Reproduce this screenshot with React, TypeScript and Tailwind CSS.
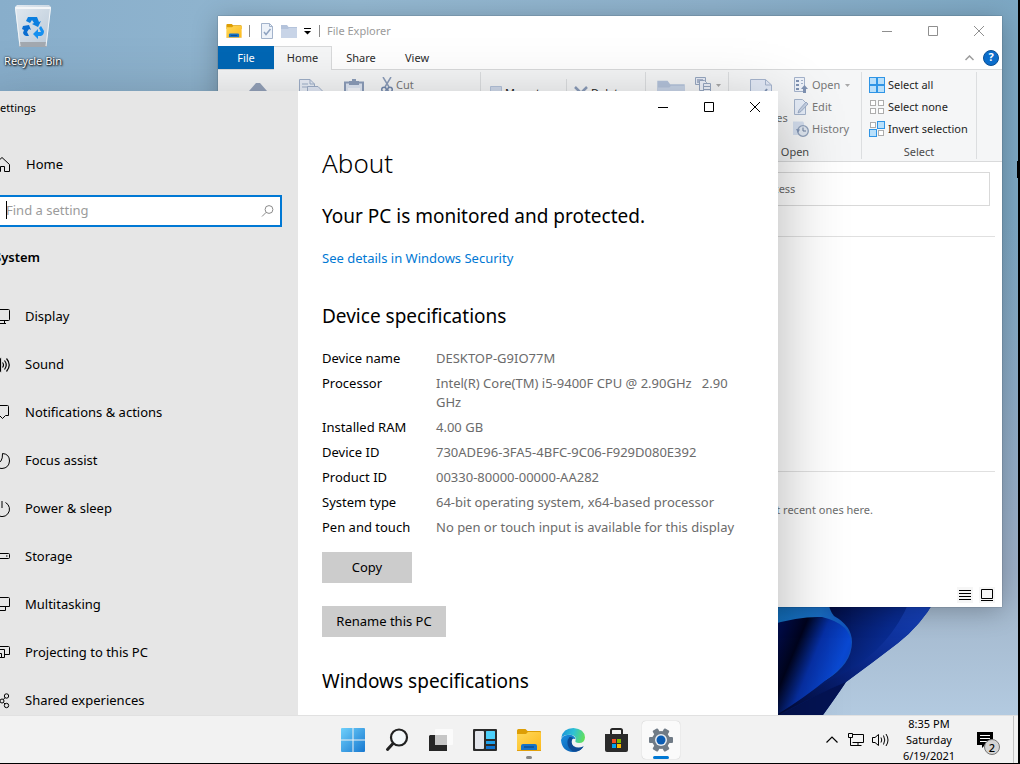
import type { ReactNode } from 'react';

type IconProps = { className?: string };

/* ---------- Desktop ---------- */

const Wallpaper = () => (
  <svg
    className="absolute inset-0 h-full w-full"
    viewBox="0 0 1018 715"
    preserveAspectRatio="xMaxYMax slice"
    aria-hidden="true"
  >
    <defs>
      <linearGradient id="sky" x1="0" y1="0" x2="1" y2="0">
        <stop offset="0" stopColor="#88aecb" />
        <stop offset="0.35" stopColor="#93b7d0" />
        <stop offset="0.7" stopColor="#8db0ca" />
        <stop offset="1" stopColor="#7ca7c3" />
      </linearGradient>
      <linearGradient id="skyLow" x1="0" y1="0" x2="0" y2="1">
        <stop offset="0.3" stopColor="#9aacc6" stopOpacity="0" />
        <stop offset="0.8" stopColor="#9db0c8" />
        <stop offset="0.86" stopColor="#a5bacf" />
        <stop offset="1" stopColor="#b3cae0" />
      </linearGradient>
      <linearGradient id="petalOuter" x1="0" y1="0" x2="1" y2="0.4">
        <stop offset="0" stopColor="#03072f" />
        <stop offset="0.35" stopColor="#03104a" />
        <stop offset="0.7" stopColor="#08298c" />
        <stop offset="1" stopColor="#0d39aa" />
      </linearGradient>
      <linearGradient id="petalEdge" x1="1" y1="0" x2="0" y2="1">
        <stop offset="0" stopColor="#1745c0" />
        <stop offset="0.5" stopColor="#0a2787" />
        <stop offset="1" stopColor="#020a38" />
      </linearGradient>
      <linearGradient id="petalInner" x1="0" y1="0.2" x2="1" y2="0.7">
        <stop offset="0" stopColor="#021060" />
        <stop offset="0.3" stopColor="#01041f" />
        <stop offset="0.52" stopColor="#0731a8" />
        <stop offset="0.8" stopColor="#0a49d2" />
        <stop offset="1" stopColor="#0a3fb8" />
      </linearGradient>
      <linearGradient id="petalRim" x1="0" y1="0" x2="1" y2="0.300">
        <stop offset="0" stopColor="#137acb" />
        <stop offset="0.6" stopColor="#1b74cf" />
        <stop offset="1" stopColor="#0f50bd" />
      </linearGradient>
    </defs>
    <rect width="1018" height="715" fill="url(#sky)" />
    <rect width="1018" height="715" fill="url(#skyLow)" />
    <path d="M770 600H935Q921 625 898 643Q872 663 846 682Q836 697 823 715H770Z" fill="url(#petalOuter)" />
    <path d="M910 600H935Q921 625 898 643Q872 663 846 682Q810 698 778 715V712Q810 690 846 672Q890 648 910 600Z" fill="url(#petalEdge)" />
    <path d="M846 682Q836 697 823 715H782Q812 696 846 682Z" fill="#041353" />
    <path d="M770 600H828Q829 610 834 616Q852 626 852 642Q852 664 826 680L778 700Z" fill="url(#petalRim)" />
    <path d="M770 625Q800 616 822 617Q852 624 851 645Q849 664 826 680Q804 698 778 714H770Z" fill="url(#petalInner)" />
  </svg>
);

const RecycleBinIcon = () => (
  <svg width="38" height="44" viewBox="0 0 38 44" aria-hidden="true">
    <defs>
      <linearGradient id="bin" x1="0" y1="0" x2="1" y2="1">
        <stop offset="0" stopColor="#e2e9f0" />
        <stop offset="1" stopColor="#b9c9d8" />
      </linearGradient>
    </defs>
    <path d="M1 3L3 1H35L37 3L32.500 43H5.500Z" fill="url(#bin)" />
    <path d="M1 3H37L36.700 5H1.300Z" fill="#f4f6f8" />
    <path d="M5 38H33L32.500 43H5.500Z" fill="#a3a9b0" />
    <path d="M1.500 4L6 42M36.500 4L32 42" stroke="#f1f5f8" fill="none" />
    <path d="M14 13h9l2 5 2-1-3 6-6-3 2-1-2-3-2 3-4-2z" fill="#0b7fe0" />
    <path d="M9 22l6-1 2 5-2-1-2 3 2 4h-3q-2 0-3-3l1-3-2-1z" fill="#0a6ed1" />
    <path d="M27 22l3 5q0 4-3 5h-3v3l-5-5 5-5v3h3l-2-4z" fill="#1590f0" />
  </svg>
);

const FolderIcon = ({ className }: IconProps) => (
  <svg className={className} viewBox="0 0 24 22" aria-hidden="true">
    <defs>
      <linearGradient id="folderFront" x1="0" y1="0" x2="1" y2="1">
        <stop offset="0" stopColor="#ffd95a" />
        <stop offset="1" stopColor="#fcb91d" />
      </linearGradient>
    </defs>
    <path d="M0 1.500Q0 0 1.500 0H8.500L10.500 2H23Q24 2 24 3V8H0Z" fill="#dd9e05" />
    <path d="M0 5H9L11 3H23Q24 3 24 4V21H0Z" fill="url(#folderFront)" />
    <path d="M4 21V17Q4 15 6 15H18Q20 15 20 17V21Z" fill="#1673c8" />
    <path d="M7 18H17" stroke="#0c4f94" strokeWidth="1.500" />
    <path d="M0 21.500H24" stroke="#e2a00c" />
  </svg>
);

/* ---------- File Explorer icons ---------- */

const CheckedDocIcon = () => (
  <svg width="12" height="16" viewBox="0 0 12 16" aria-hidden="true">
    <path d="M.5.5H8.500L11.500 3.500V15.500H.5Z" fill="#edf2f9" stroke="#a3b3cb" />
    <path d="M8.500.5V3.500H11.500" fill="none" stroke="#a3b3cb" />
    <path d="M3 9L5 11.500L9.500 6" fill="none" stroke="#8ea2c0" strokeWidth="1.500" />
  </svg>
);

const PaleFolderIcon = ({ className }: IconProps) => (
  <svg className={className} viewBox="0 0 16 14" aria-hidden="true">
    <path d="M0 1H6L7.500 3H16V14H0Z" fill="#b4c3db" />
    <path d="M0 5H7L8 4H16V14H0Z" fill="#c8d4e7" />
  </svg>
);

const PinIcon = () => (
  <svg width="20" height="26" viewBox="0 0 20 26" aria-hidden="true">
    <path d="M8 4H12L19 12V16H1V12Z" fill="#94a2ba" />
    <path d="M10 16V24" stroke="#94a2ba" strokeWidth="2" />
  </svg>
);

const CopyIcon = () => (
  <svg width="24" height="26" viewBox="0 0 24 26" aria-hidden="true">
    <path d="M.5.5H11L15.500 5V20.500H.5Z" fill="#e9eef8" stroke="#9fafc9" />
    <path d="M11 .5V5H15.500M3 5H9M3 8H12" fill="none" stroke="#9fafc9" />
    <path d="M8.500 7.500H19L23.500 12V25.500H8.500Z" fill="#e2e9f6" stroke="#9fafc9" />
  </svg>
);

const PasteIcon = () => (
  <svg width="20" height="26" viewBox="0 0 20 26" aria-hidden="true">
    <path d="M1 3.500H19V25H1Z" fill="#dfe7f4" stroke="#8c9dba" strokeWidth="2" />
    <path d="M5 2H8V0H12V2H15V6H5Z" fill="#8c9dba" />
    <path d="M4 9H16V25H4Z" fill="#f3f6fb" />
  </svg>
);

const ScissorsIcon = () => (
  <svg width="12" height="16" viewBox="0 0 12 16" aria-hidden="true">
    <path d="M2 0L8 10M10 0L4 10" stroke="#8c9dba" strokeWidth="1.500" />
    <circle cx="3" cy="12.500" r="2.300" fill="none" stroke="#7389ae" strokeWidth="1.500" />
    <circle cx="9" cy="12.500" r="2.300" fill="none" stroke="#7389ae" strokeWidth="1.500" />
  </svg>
);

const StackIcon = () => (
  <svg width="16" height="16" viewBox="0 0 16 16" aria-hidden="true">
    <path d="M.5.5H10.500V7.500H.5Z" fill="#e9eef8" stroke="#97a7c1" />
    <path d="M2 3H8M2 5H6" stroke="#6d80a2" />
    <path d="M4.500 3.500H9.500L11.500 5.500V13.500H4.500Z" fill="#eef2fa" stroke="#97a7c1" />
    <path d="M8.500 6.500H15.500V15.500H8.500Z" fill="#eef2fa" stroke="#97a7c1" />
    <path d="M9 9.500H15M9 12.500H15" stroke="#97a7c1" />
  </svg>
);

const PropertiesIcon = () => (
  <svg width="22" height="26" viewBox="0 0 22 26" aria-hidden="true">
    <path d="M.5.5H15.500L21.500 6V25.500H.5Z" fill="#e2e9f6" stroke="#a6b5ce" />
    <path d="M15.500.5V6H21.500" fill="none" stroke="#a6b5ce" />
    <path d="M5 17L9 21L17 10" stroke="#8194b4" strokeWidth="2" fill="none" />
  </svg>
);

const OpenIcon = () => (
  <svg width="16" height="16" viewBox="0 0 16 16" aria-hidden="true">
    <path d="M1.500.5H11.500V14.500H1.500Z" fill="#eef2f9" stroke="#a4b3cb" />
    <path d="M3 3H6V5H3ZM3 7H6V9H3ZM3 11H6V13H3Z" fill="#7f92b2" />
    <path d="M8 3.500H10M8 6.500H10" stroke="#a4b3cb" />
    <path d="M11.500 8L15 12H13V16H10V12H8Z" fill="#7f92b2" />
  </svg>
);

const EditIcon = () => (
  <svg width="16" height="16" viewBox="0 0 16 16" aria-hidden="true">
    <path d="M1.500.5H9.500L12.500 3.500V15.500H1.500Z" fill="#e6edf8" stroke="#a4b3cb" />
    <path d="M5 14L6 11L13 3L15 5L8 12.500Z" fill="#c3cfe2" stroke="#8fa1be" strokeWidth="0.800" />
  </svg>
);

const HistoryIcon = () => (
  <svg width="16" height="16" viewBox="0 0 16 16" aria-hidden="true">
    <path d="M0 .5H10L11 2V14H0Z" fill="#d3dded" />
    <circle cx="10" cy="10" r="5.300" fill="#dfe6f0" stroke="#8fa0ba" strokeWidth="1.300" />
    <path d="M10 6.500V10H13" stroke="#6b7d9b" fill="none" />
    <path d="M3 8L5 12L7 8.500" fill="#7f92b2" />
  </svg>
);

// four tiles, filled ones are drawn in blue
const TilesIcon = ({ filled }: { filled: boolean[] }) => (
  <svg width="16" height="16" viewBox="0 0 16 16" aria-hidden="true">
    {filled.map((on, i) => {
      const x = (i % 2) * 8;
      const y = Math.floor(i / 2) * 8;
      return on ? (
        <rect key={i} x={x + 0.5} y={y + 0.5} width="7" height="7" fill="#b9e0fb" stroke="#2f95e6" />
      ) : (
        <rect key={i} x={x + 1.5} y={y + 1.5} width="5" height="5" fill="#fff" stroke="#adadad" />
      );
    })}
  </svg>
);

const ArrowBlockIcon = () => (
  <svg width="12" height="14" viewBox="0 0 12 14" aria-hidden="true">
    <path d="M.5.5H11.500V13.500H.5Z" fill="#cfd9ea" stroke="#b4c3db" />
  </svg>
);

const CrossIcon = () => (
  <svg width="14" height="14" viewBox="0 0 14 14" aria-hidden="true">
    <path d="M1 1L13 13M13 1L1 13" stroke="#8c9dba" strokeWidth="2.500" />
  </svg>
);

const Caret = ({ className }: IconProps) => (
  <svg className={className} width="5" height="3" viewBox="0 0 5 3" aria-hidden="true">
    <path d="M0 0H5L2.500 3Z" fill="currentColor" />
  </svg>
);

/* ---------- Window buttons ---------- */

function WindowControls({ className }: IconProps) {
  return (
    <div className={`flex ${className}`}>
      <button type="button" aria-label="Minimize" className="flex w-[46px] items-center justify-center">
        <svg width="10" height="10" shapeRendering="crispEdges"><path d="M0 5.500H10" stroke="currentColor" /></svg>
      </button>
      <button type="button" aria-label="Maximize" className="flex w-[46px] items-center justify-center">
        <svg width="10" height="10"><path d="M.5.5H9.500V9.500H.5Z" fill="none" stroke="currentColor" /></svg>
      </button>
      <button type="button" aria-label="Close" className="flex w-[46px] items-center justify-center">
        <svg width="10" height="10"><path d="M0 0L10 10M10 0L0 10" stroke="currentColor" /></svg>
      </button>
    </div>
  );
}

/* ---------- File Explorer ---------- */

function RibbonGroup({ label, className, children }: { label: string; className: string; children: ReactNode }) {
  return (
    <section className={`flex shrink-0 flex-col pt-1 ${className}`}>
      <div className="flex h-[69px]">{children}</div>
      <div className="text-center leading-[18px] text-[#4b4b4b]">{label}</div>
    </section>
  );
}

const RibbonDivider = () => <div className="my-[2px] w-px shrink-0 bg-[#dcdee0]" />;

function BigButton({ icon, label, className }: { icon: ReactNode; label: string; className: string }) {
  return (
    <button type="button" className={`flex shrink-0 flex-col items-center gap-1 pt-[5px] text-[#6d6d6d] ${className}`}>
      {icon}
      <span className="leading-[18px]">{label}</span>
    </button>
  );
}

function SmallButton({ icon, label, disabled, caret }: { icon: ReactNode; label: string; disabled?: boolean; caret?: boolean }) {
  return (
    <button
      type="button"
      className={`flex h-[22px] items-center gap-[3px] whitespace-nowrap ${disabled ? 'text-[#777777]' : 'text-[#1e1e1e]'}`}
    >
      {icon}
      {label && <span>{label}</span>}
      {caret && <Caret className="ml-[2px] text-[#a8a8a8]" />}
    </button>
  );
}

function FileExplorer() {
  return (
    <div className="absolute top-4 left-[218px] flex h-[591px] w-[784px] flex-col overflow-hidden bg-white text-[11px] shadow-[0_4px_24px_rgba(0,0,0,0.25),0_0_1px_rgba(0,0,0,0.5)]">
      <header className="flex h-[30px] shrink-0 pl-2">
        <div className="flex items-center text-[#9a9a9a]">
          <FolderIcon className="h-[14px] w-4" />
          <div className="ml-[7px] h-3 w-px bg-[#8a8a8a]" />
          <button type="button" aria-label="Properties" className="ml-[11px]"><CheckedDocIcon /></button>
          <button type="button" aria-label="New folder" className="ml-2"><PaleFolderIcon className="h-[14px] w-4" /></button>
          <button type="button" aria-label="Customize Quick Access Toolbar" className="ml-[7px] text-black">
            <svg width="7" height="7" viewBox="0 0 7 7"><path d="M0 .5H7" stroke="currentColor" /><path d="M0 3H7L3.500 6.500Z" fill="currentColor" /></svg>
          </button>
          <div className="ml-2 h-3 w-px bg-[#8a8a8a]" />
          <h2 className="ml-[7px]">File Explorer</h2>
        </div>
        <WindowControls className="ml-auto text-[#8f8f8f]" />
      </header>

      <nav className="flex h-6 shrink-0 border-b border-[#d9dadb] text-[#2b2b2b]">
        <button type="button" className="w-14 bg-[#0067b5] pt-px text-white">File</button>
        <button type="button" className="-mb-px w-[58px] border-t border-r border-[#d9dadb] bg-[#f5f6f7]">Home</button>
        <button type="button" className="w-[58px] pt-px">Share</button>
        <button type="button" className="w-[54px] pt-px">View</button>
        <div className="ml-auto flex items-center gap-[9px] pr-[3px]">
          <button type="button" aria-label="Collapse the Ribbon">
            <svg width="9" height="6" viewBox="0 0 9 6"><path d="M.5 5L4.500 1L8.500 5" fill="none" stroke="#9b9b9b" strokeWidth="1.500" /></svg>
          </button>
          <button type="button" aria-label="Help" className="flex h-4 w-4 items-center justify-center rounded-full border border-[#0a4f94] bg-[#0b6dcb] font-bold text-white">
            ?
          </button>
        </div>
      </nav>

      <div className="flex h-[92px] shrink-0 border-b border-[#d9dadb] bg-[#f5f6f7]">
        <RibbonGroup label="Clipboard" className="w-[262px] pl-3">
          <BigButton icon={<PinIcon />} label="Pin" className="w-14" />
          <BigButton icon={<CopyIcon />} label="Copy" className="w-[50px]" />
          <BigButton icon={<PasteIcon />} label="Paste" className="w-9" />
          <div className="pl-[9px]"><SmallButton disabled icon={<ScissorsIcon />} label="Cut" /></div>
        </RibbonGroup>
        <RibbonDivider />
        <RibbonGroup label="Organize" className="w-[164px]">
          <div className="w-[85px] pt-2 pl-[9px]">
            <SmallButton icon={<ArrowBlockIcon />} label="Move to" />
            <SmallButton icon={<ArrowBlockIcon />} label="Copy to" />
          </div>
          <div className="mt-[5px] w-px bg-[#dcdee0]" />
          <div className="pt-2 pl-[7px]">
            <SmallButton icon={<CrossIcon />} label="Delete" />
            <SmallButton icon={<ArrowBlockIcon />} label="Rename" />
          </div>
        </RibbonGroup>
        <RibbonDivider />
        <RibbonGroup label="New" className="w-[82px]">
          <BigButton icon={<PaleFolderIcon className="h-6 w-7" />} label="New" className="w-[49px]" />
          <div><SmallButton disabled caret icon={<StackIcon />} label="" /></div>
        </RibbonGroup>
        <RibbonDivider />
        <RibbonGroup label="Open" className="w-[132px]">
          <BigButton icon={<PropertiesIcon />} label="Properties" className="w-16" />
          <div>
            <SmallButton disabled caret icon={<OpenIcon />} label="Open" />
            <SmallButton disabled icon={<EditIcon />} label="Edit" />
            <SmallButton disabled icon={<HistoryIcon />} label="History" />
          </div>
        </RibbonGroup>
        <RibbonDivider />
        <RibbonGroup label="Select" className="w-[114px]">
          <div className="pl-[7px]">
            <SmallButton icon={<TilesIcon filled={[true, true, true, true]} />} label="Select all" />
            <SmallButton icon={<TilesIcon filled={[false, false, false, false]} />} label="Select none" />
            <SmallButton icon={<TilesIcon filled={[false, true, true, false]} />} label="Invert selection" />
          </div>
        </RibbonGroup>
        <RibbonDivider />
      </div>

      <div className="flex justify-end pt-[10px] pr-3">
        <input
          type="text"
          aria-label="Search Quick access"
          placeholder="Search Quick access"
          className="h-[34px] w-[306px] border border-[#d9d9d9] pb-[2px] pl-[7px] outline-none placeholder:text-[#6d6d6d]"
        />
      </div>

      <div className="mt-[30px] mr-[7px] flex h-[235px] flex-col border-t border-[#e0e0e0]" />
      <div className="mr-[7px] border-t border-[#e0e0e0] pt-[29px] pr-[122px] text-right leading-[18px] text-[#6d6d6d]">
        After you've opened some files, we'll show the most recent ones here.
      </div>

      <footer className="mt-auto flex justify-end gap-[6px] pr-[7px] pb-1">
        <button type="button" aria-label="Details view" className="flex h-4 w-4 items-center justify-center bg-[#f6f6f6]">
          <svg width="12" height="11" viewBox="0 0 12 11"><path d="M0 .5H12M0 3.500H12M0 6.500H12M0 9.500H12" stroke="#000" /></svg>
        </button>
        <button type="button" aria-label="Large icons view" className="flex h-4 w-4 items-center justify-center bg-[#f6f6f6]">
          <svg width="12" height="12" viewBox="0 0 12 12"><path d="M.5.5H11.500V9.500H.5Z" fill="none" stroke="#000" /><path d="M0 11.500H12" stroke="#000" /></svg>
        </button>
      </footer>
    </div>
  );
}

/* ---------- Settings ---------- */

const NavIcon = ({ children }: { children: ReactNode }) => (
  <svg className="shrink-0" width="16" height="16" viewBox="0 0 16 16" fill="none" stroke="#000" aria-hidden="true">
    {children}
  </svg>
);

const navItems: { label: string; icon: ReactNode }[] = [
  { label: 'Display', icon: <path d="M1.500 .5H14.500Q15.500 .5 15.500 1.500V10.500Q15.500 11.500 14.500 11.500H1.500Q.5 11.500 .5 10.500V1.500Q.5.5 1.500.5ZM5 14.500H12M10.500 11.500V14.500" /> },
  { label: 'Sound', icon: <path d="M.5 5.500H3L6.500 2V14L3 10.500H.5ZM8.500 5.500Q10.500 8 8.500 10.500M10.500 3.500Q14 8 10.500 12.500M12.500 1.500Q18 8 12.500 14.500" strokeWidth="1.200" /> },
  { label: 'Notifications & actions', icon: <path d="M.5.500H13.500Q14.500.500 14.500 1.500V10.500H11.500L8.500 13.500L5.500 10.500H.5Z" /> },
  { label: 'Focus assist', icon: <path d="M8.500 .5Q15.500 1 15.500 8Q15 15 8 15.500Q3 15.500 1 11Q9 10.500 8.500 .5Z" /> },
  { label: 'Power & sleep', icon: <path d="M8 0V7M11.500 1.500A7.500 7.500 0 1 1 4.500 1.500" /> },
  { label: 'Storage', icon: <path d="M.5 4.500H14.500Q15.500 4.500 15.500 5.500V8.500Q15.500 9.500 14.500 9.500H.5ZM12 7H13.500" /> },
  { label: 'Multitasking', icon: <path d="M1.500.5H14.500Q15.500.5 15.500 1.500V9.500H.5V1.500ZM11.500 9.500V13.500H4" /> },
  { label: 'Projecting to this PC', icon: <path d="M3.500 4V1.500H14.500Q15.500 1.500 15.500 2.500V9.500H10.500M.5 4.500H10.500V12.500H.5ZM3 12.500V8.500H7.500V12.500" /> },
  {
    label: 'Shared experiences',
    icon: (
      <>
        <circle cx="12.500" cy="3" r="2.200" />
        <circle cx="12.500" cy="12.500" r="2.200" />
        <circle cx="8" cy="8" r="2" />
        <circle cx="3" cy="4" r="2" />
        <path d="M11 4.500L9.500 6.500M11 11L9.500 9.500M4 8H6" />
      </>
    ),
  },
];

const deviceSpecs = [
  ['Device name', 'DESKTOP-G9IO77M'],
  ['Processor', 'Intel(R) Core(TM) i5-9400F CPU @ 2.90GHz \u00a0 2.90 GHz'],
  ['Installed RAM', '4.00 GB'],
  ['Device ID', '730ADE96-3FA5-4BFC-9C06-F929D080E392'],
  ['Product ID', '00330-80000-00000-AA282'],
  ['System type', '64-bit operating system, x64-based processor'],
  ['Pen and touch', 'No pen or touch input is available for this display'],
];

function SettingsSidebar() {
  return (
    <aside className="w-80 shrink-0 bg-[#e6e6e6] px-4">
      <h1 className="pt-px text-[11px] leading-8">Settings</h1>
      <a href="#home" className="mt-[17px] flex h-12 items-center gap-4">
        <NavIcon><path d="M.5 7.500L8 .5L15.500 7.500V14.500H10.500V9.500H6.500V14.500H2V6.500" /></NavIcon>
        Home
      </a>
      <div className="relative mt-[6px]">
        <input
          type="text"
          aria-label="Find a setting"
          placeholder="Find a setting"
          className="block h-8 w-full border-2 border-[#0078d4] bg-white pr-8 pb-[2px] pl-[10px] outline-none placeholder:text-[#9b9b9b]"
        />
        <span className="absolute top-[6px] left-3 h-[18px] w-px bg-black" />
        <svg className="absolute top-[10px] right-2 text-[#8a8a8a]" width="13" height="13" viewBox="0 0 13 13" fill="none" stroke="currentColor" aria-hidden="true">
          <circle cx="8" cy="4.500" r="3.900" />
          <path d="M5.200 7.300L1 11.500" />
        </svg>
      </div>
      <h2 className="mt-[14px] leading-8 font-semibold">System</h2>
      <nav className="mt-5">
        {navItems.map((item) => (
          <a key={item.label} href="#system" className="flex h-12 items-center gap-[15px]">
            <NavIcon>{item.icon}</NavIcon>
            {item.label}
          </a>
        ))}
      </nav>
    </aside>
  );
}

function SettingsWindow() {
  return (
    <div className="absolute top-[91px] -left-[22px] flex h-[680px] w-[800px] bg-white text-[13px] text-black shadow-[0_20px_64px_rgba(0,0,0,0.3)]">
      <SettingsSidebar />
      <main className="flex-1">
        <WindowControls className="h-8 justify-end" />
        <div className="pr-8 pl-6">
          <h2 className="mt-[22px] text-[26px] leading-9 font-light">About</h2>
          <h3 className="mt-[21px] text-[19px] leading-7">Your PC is monitored and protected.</h3>
          <a href="#security" className="mt-[18px] block leading-5 text-[#0078d4]">See details in Windows Security</a>
          <h3 className="mt-[34px] text-[19px] leading-7">Device specifications</h3>
          <table className="mt-[19px] w-full text-left leading-[19px]">
            <tbody>
              {deviceSpecs.map(([name, value]) => (
                <tr key={name} className="align-top">
                  <th scope="row" className="w-[114px] pb-[6px] font-normal">{name}</th>
                  <td className="pb-[6px] text-[#6b6b6b]">{value}</td>
                </tr>
              ))}
            </tbody>
          </table>
          <button type="button" className="mt-[9px] block h-[31px] w-[90px] bg-[#cccccc] pt-px">Copy</button>
          <button type="button" className="mt-[23px] block h-[31px] w-[124px] bg-[#cccccc] pt-px">Rename this PC</button>
          <h3 className="mt-[30px] text-[19px] leading-7">Windows specifications</h3>
        </div>
      </main>
    </div>
  );
}

/* ---------- Taskbar ---------- */

const StartIcon = () => (
  <svg width="24" height="24" viewBox="0 0 24 24" aria-hidden="true">
    <defs>
      <linearGradient id="start" gradientUnits="userSpaceOnUse" x1="0" y1="0" x2="24" y2="24">
        <stop offset="0" stopColor="#6fd0fb" />
        <stop offset="1" stopColor="#1778d0" />
      </linearGradient>
    </defs>
    <path d="M1 0H11.500V11.500H0V1Q0 0 1 0ZM12.500 0H23Q24 0 24 1V11.500H12.500ZM0 12.500H11.500V24H1Q0 24 0 23ZM12.500 12.500H24V23Q24 24 23 24H12.500Z" fill="url(#start)" />
  </svg>
);

const SearchIcon = () => (
  <svg width="24" height="24" viewBox="0 0 24 24" fill="none" stroke="#222" aria-hidden="true">
    <circle cx="14" cy="9.500" r="8" strokeWidth="2.200" fill="#f4f8fa" />
    <path d="M8 15.500L2.500 21.500" strokeWidth="3" strokeLinecap="round" />
  </svg>
);

const TaskViewIcon = () => (
  <svg width="24" height="24" viewBox="0 0 24 24" aria-hidden="true">
    <path d="M1 7H18V23H0V8Z" fill="#262626" />
    <path d="M7 1H23Q24 1 24 2V16Q24 17 23 17H6V2Q6 1 7 1Z" fill="#fbfbfb" />
    <path d="M6 7H18V17H6Z" fill="#c6c6c6" />
  </svg>
);

const WidgetsIcon = () => (
  <svg width="24" height="22" viewBox="0 0 24 22" aria-hidden="true">
    <rect width="24" height="22" rx="1" fill="#2b2b2b" />
    <rect x="2" y="2" width="9" height="18" rx="1" fill="#e4e6ec" />
    <rect x="13" y="2" width="9" height="8" rx="0.500" fill="#4cd0fb" />
    <rect x="13" y="12" width="9" height="3" fill="#1ea0ea" />
    <rect x="13" y="17" width="9" height="3" fill="#0d74d1" />
  </svg>
);

const EdgeIcon = () => (
  <svg width="24" height="24" viewBox="0 0 24 24" aria-hidden="true">
    <defs>
      <linearGradient id="edgeTop" x1="0" y1="0.300" x2="1" y2="0.500">
        <stop offset="0" stopColor="#1b93d8" />
        <stop offset="0.5" stopColor="#2fc1d5" />
        <stop offset="1" stopColor="#62e05b" />
      </linearGradient>
      <linearGradient id="edgeLow" x1="0" y1="0" x2="1" y2="1">
        <stop offset="0" stopColor="#1a8fe0" />
        <stop offset="1" stopColor="#0a54a5" />
      </linearGradient>
    </defs>
    <path d="M.2 10Q2 0 12.500 0Q23.500 .8 24 9.500Q23.500 15 18 15Q13.500 14.800 14.500 12.500Q16 8 9.500 6.800Q3 6.500 .2 10Z" fill="url(#edgeTop)" />
    <path d="M0 12Q1 7 8 6.800Q13.500 7 14.500 11Q9.500 9.500 8.800 14Q9 20 16 20.500Q19.500 20.500 22.500 18.500Q19 24 12 24Q1 23.500 0 12Z" fill="url(#edgeLow)" />
    <path d="M8.500 9Q4.500 14 8 20Q10.500 23.500 14 23.800Q20 23 22.700 18.300Q17 21 12.500 18Q9 14.500 12 10Q10.500 8.500 8.500 9Z" fill="#0d4a94" />
  </svg>
);

const StoreIcon = () => (
  <svg width="24" height="24" viewBox="0 0 24 24" aria-hidden="true">
    <path d="M6 7V2.500Q6 1 7.500 1H15.500Q17 1 17 2.500V7" fill="none" stroke="#262626" strokeWidth="2" />
    <path d="M0 6H23V22Q23 24 21 24H2Q0 24 0 22Z" fill="#2b2b2b" />
    <rect x="7" y="11" width="4" height="4" fill="#f25022" />
    <rect x="12" y="11" width="4" height="4" fill="#7fba00" />
    <rect x="7" y="16" width="4" height="4" fill="#00a4ef" />
    <rect x="12" y="16" width="4" height="4" fill="#ffb900" />
  </svg>
);

const GearIcon = () => (
  <svg width="24" height="24" viewBox="0 0 24 24" aria-hidden="true">
    <g fill="#707b86">
      <circle cx="12" cy="12" r="9" />
      {[0, 60, 120].map((angle) => (
        <rect key={angle} x="0" y="9" width="24" height="6" rx="1" transform={`rotate(${angle} 12 12)`} />
      ))}
    </g>
    <circle cx="12" cy="12" r="6" fill="#e8edf2" />
    <circle cx="12" cy="12" r="4.500" fill="#0b5cb3" />
  </svg>
);

const taskbarApps: { label: string; icon: ReactNode; state?: 'active' | 'running' }[] = [
  { label: 'Start', icon: <StartIcon /> },
  { label: 'Search', icon: <SearchIcon /> },
  { label: 'Task View', icon: <TaskViewIcon /> },
  { label: 'Widgets', icon: <WidgetsIcon /> },
  { label: 'File Explorer', icon: <FolderIcon className="h-[22px] w-6" />, state: 'running' },
  { label: 'Microsoft Edge', icon: <EdgeIcon /> },
  { label: 'Microsoft Store', icon: <StoreIcon /> },
  { label: 'Settings', icon: <GearIcon />, state: 'active' },
];

function Taskbar() {
  return (
    <footer className="relative z-10 grid h-12 shrink-0 grid-cols-[1fr_auto_1fr] border-t border-[#e1e1e1] bg-[#f2f2f2]">
      <div />
      <nav className="flex items-center gap-[6px] pr-1 pb-[2px]">
        {taskbarApps.map((app) => (
          <button
            key={app.label}
            type="button"
            aria-label={app.label}
            className={`relative flex h-[38px] w-[38px] items-center justify-center rounded ${
              app.state === 'active' ? 'bg-[#fafafa] shadow-[0_0_1px_rgba(0,0,0,0.3)]' : ''
            }`}
          >
            {app.icon}
            {app.state === 'running' && <span className="absolute bottom-0 h-[3px] w-[6px] rounded-full bg-[#868686]" />}
            {app.state === 'active' && <span className="absolute bottom-0 h-[3px] w-4 rounded-full bg-[#0078d4]" />}
          </button>
        ))}
      </nav>
      <div className="flex justify-end">
        <div className="flex items-center pr-[19px] pb-[2px]">
          <button type="button" aria-label="Show hidden icons">
            <svg width="12" height="8" viewBox="0 0 12 8"><path d="M.5 6.500L6 1L11.500 6.500" fill="none" stroke="#000" strokeWidth="1.200" /></svg>
          </button>
          <button type="button" aria-label="Network" className="ml-[10px]">
            <svg width="16" height="14" viewBox="0 0 16 14" fill="none" stroke="#000"><path d="M4.500 1.500H15.500V9.500H4.500M10 9.500V12.500M6 12.500H13.500M.5.500H4.500V4.500H.5ZM2.500 4.500V12.500H6" /></svg>
          </button>
          <button type="button" aria-label="Volume" className="ml-2">
            <svg width="17" height="14" viewBox="0 0 17 14" fill="none" stroke="#000"><path d="M.5 4.500H3L6.500 1.500V12.500L3 9.500H.5ZM9 4.500Q10.500 7 9 9.500M11.500 2.500Q14 7 11.500 11.500M14 1Q18 7 14 13" /></svg>
          </button>
          <time className="ml-[9px] w-[62px] text-center text-[11px] leading-4 text-black" dateTime="2021-06-19T20:35">
            <span className="block">8:35 PM</span>
            <span className="block">Saturday</span>
            <span className="block">6/19/2021</span>
          </time>
          <button type="button" aria-label="2 new notifications" className="relative ml-[17px]">
            <svg width="17" height="16" viewBox="0 0 17 16"><path d="M0 0H16V13H8L5 16V13H0Z" fill="#000" /><path d="M3 3.500H13M3 6.500H13M3 9.500H10" stroke="#fff" /></svg>
            <span className="absolute top-[7px] left-[7px] flex h-4 w-4 items-center justify-center rounded-full border border-[#777777] bg-[#d4d4d4] text-[11px] leading-none font-medium">2</span>
          </button>
        </div>
        <div className="w-px bg-[#c4c4c4]" />
        <button type="button" aria-label="Show desktop" className="w-1" />
      </div>
    </footer>
  );
}

export default function App() {
  return (
    <div className="flex h-screen flex-col overflow-hidden border-r-2 border-b border-black font-['Noto_Sans','Open_Sans',sans-serif]">
      <div className="relative flex-1 overflow-hidden">
        <Wallpaper />
        <a href="#recycle-bin" className="absolute top-1 left-0 flex w-[66px] flex-col items-center gap-1 text-[11px] leading-[18px] whitespace-nowrap text-white [text-shadow:1px_1px_2px_#000,0_0_2px_#000]">
          <RecycleBinIcon />
          Recycle Bin
        </a>
        <FileExplorer />
        <SettingsWindow />
        <span className="absolute top-[161px] right-0 h-[17px] w-px bg-black" />
      </div>
      <Taskbar />
    </div>
  );
}
